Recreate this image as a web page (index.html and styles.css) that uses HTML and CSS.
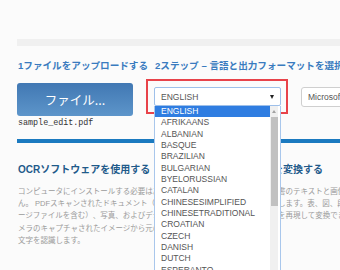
FILE: index.html
```html
<!DOCTYPE html>
<html lang="ja">
<head>
<meta charset="utf-8">
<title>OCR</title>
<link rel="stylesheet" href="styles.css">
</head>
<body>
<div class="page">
  <div class="band"></div>
  <div class="steps">
    <div class="step step1">
      <h2 class="step-title">1ファイルをアップロードする</h2>
      <button class="file-btn" type="button">ファイル...</button>
      <div class="filename">sample_edit.pdf</div>
    </div>
    <div class="step step2">
      <h2 class="step-title">2ステップ – 言語と出力フォーマットを選択</h2>
      <div class="selects">
        <div class="lang">
          <div class="marker"></div>
          <div class="select lang-select"><span>ENGLISH</span><span class="caret"></span></div>
          <div class="dropdown">
            <ul class="options">
              <li class="sel">ENGLISH</li>
              <li>AFRIKAANS</li>
              <li>ALBANIAN</li>
              <li>BASQUE</li>
              <li>BRAZILIAN</li>
              <li>BULGARIAN</li>
              <li>BYELORUSSIAN</li>
              <li>CATALAN</li>
              <li>CHINESESIMPLIFIED</li>
              <li>CHINESETRADITIONAL</li>
              <li>CROATIAN</li>
              <li>CZECH</li>
              <li>DANISH</li>
              <li>DUTCH</li>
              <li>ESPERANTO</li>
              <li>ESTONIAN</li>
            </ul>
            <div class="scroll">
              <div class="scroll-up"></div>
              <div class="thumb"></div>
            </div>
          </div>
        </div>
        <div class="select format-select">Microsoft Word (docx)</div>
      </div>
    </div>
  </div>
  <div class="rule"></div>
  <div class="features">
    <section class="feature">
      <h3>OCRソフトウェアを使用する</h3>
      <p>コンピュータにインストールする必要はありません。 PDFスキャンされたドキュメント（複数ページファイルを含む）、写真、およびデジタルカメラのキャプチャされたイメージから元の書体の文字を認識します。</p>
    </section>
    <section class="feature">
      <h3>スキャン済PDFを変換する</h3>
      <p>スキャンされた紙の文書のテキストと画像を認識し、ワード形式に変換します。表、図、段組みや書式などのレイアウトを再現して変換できます。</p>
    </section>
  </div>
</div>
</body>
</html>
```
FILE: styles.css
```css
html, body {
  margin: 0;
  padding: 0;
}
body {
  width: 340px;
  height: 270px;
  overflow: hidden;
  background: #fbfbfb;
  font-family: "Liberation Sans", "Noto Sans CJK JP", sans-serif;
}
.page {
  width: 700px;
  padding: 39px 0 0 17px;
}
.band {
  height: 7px;
  background: #f0f0f0;
}
.steps {
  display: flex;
  margin-top: 14px;
}
.step1 {
  flex: none;
  width: 137px;
}
.step2 {
  flex: 1;
}
.step-title {
  margin: 0 0 0 1px;
  font-size: 9.6px;
  line-height: 12px;
  font-weight: bold;
  color: #3a7bbf;
  white-space: nowrap;
}
.file-btn {
  display: block;
  margin-top: 11px;
  width: 116px;
  height: 33px;
  padding: 0;
  border: 0;
  border-radius: 3px;
  background: linear-gradient(#4178b3, #5d95ca);
  color: #fff;
  font-family: "Noto Sans CJK JP", sans-serif;
  font-size: 12.5px;
}
.filename {
  margin: 2px 0 0 1px;
  font-family: "Liberation Mono", monospace;
  font-size: 8.4px;
  line-height: 10px;
  color: #333;
}
.selects {
  display: flex;
  gap: 20px;
  margin-top: 15px;
}
.lang {
  position: relative;
  flex: none;
  width: 127px;
}
.select {
  box-sizing: border-box;
  height: 19px;
  display: flex;
  align-items: center;
  padding: 0 6px;
  border: 1px solid #cfcfcf;
  border-radius: 3px;
  background: #fff;
  font-size: 8.5px;
  color: #555;
  white-space: nowrap;
}
.lang-select {
  position: relative;
  justify-content: space-between;
  border-color: #9ec0ea;
  border-radius: 2px;
}
.caret {
  width: 0;
  height: 0;
  border-left: 2.5px solid transparent;
  border-right: 2.5px solid transparent;
  border-top: 4px solid #222;
  margin-right: 0;
}
.format-select {
  flex: none;
  width: 150px;
  height: 20px;
}
.marker {
  position: absolute;
  left: -8px;
  top: -8px;
  right: -7px;
  bottom: -7px;
  border: 2px solid #e8434a;
}
.dropdown {
  position: absolute;
  left: 0;
  top: 19px;
  z-index: 2;
  box-sizing: border-box;
  width: 127px;
  height: 190px;
  display: flex;
  border: 1px solid #a9c7ec;
  border-top: 0;
  background: #fff;
}
.options {
  flex: 1;
  list-style: none;
  margin: 0;
  padding: 0;
  font-size: 8.5px;
  color: #555;
}
.options li {
  height: 11.33px;
  line-height: 11.33px;
  padding-left: 6px;
  white-space: nowrap;
}
.options .sel {
  background: #2f7de1;
  color: #fff;
}
.scroll {
  flex: none;
  width: 8px;
  margin-right: 2px;
  background: #f0f0f0;
  display: flex;
  flex-direction: column;
  align-items: center;
}
.scroll-up {
  width: 0;
  height: 0;
  margin: 4px 0 4px;
  border-left: 2px solid transparent;
  border-right: 2px solid transparent;
  border-bottom: 3px solid #a3a3a3;
}
.thumb {
  width: 7px;
  height: 89px;
  background: #c1c1c1;
}
.rule {
  height: 4px;
  margin-top: 11px;
  background: #1b7ac0;
}
.features {
  display: grid;
  grid-template-columns: 165px 165px;
  column-gap: 20px;
  margin-top: 20px;
  padding-left: 1px;
}
.feature h3 {
  margin: 0;
  font-size: 10px;
  line-height: 14px;
  font-weight: bold;
  color: #1f5a8a;
  white-space: nowrap;
}
.feature p {
  width: 22em;
  margin: 9px 0 0;
  font-size: 7.5px;
  line-height: 12.2px;
  color: #9a9a9a;
  line-break: normal;
  text-spacing-trim: space-all;
}
```
